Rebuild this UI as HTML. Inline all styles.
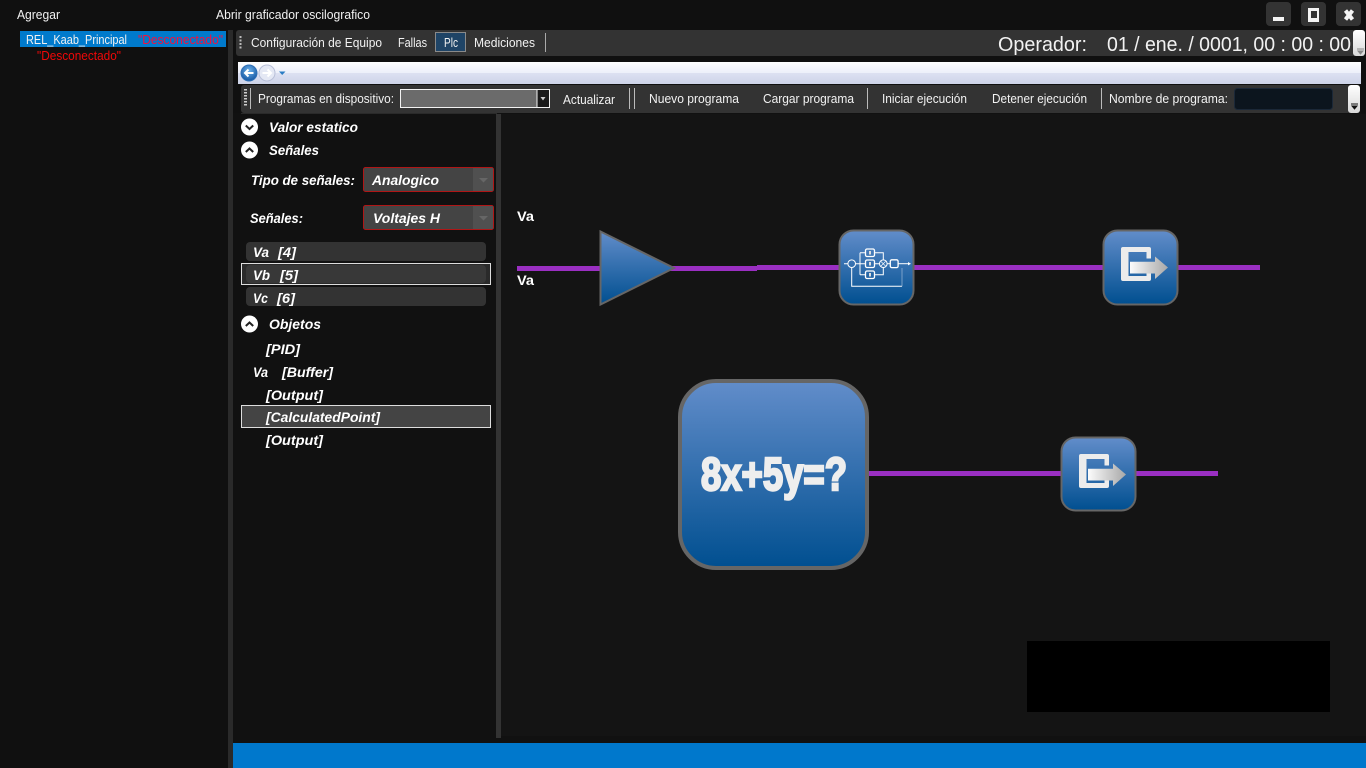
<!DOCTYPE html>
<html><head><meta charset="utf-8"><title>PLC</title>
<style>
html,body{margin:0;padding:0;width:1366px;height:768px;overflow:hidden;background:#101010}
svg{display:block;position:absolute;left:0;top:0}
text{font-family:"Liberation Sans",sans-serif;font-size:12.5px;fill:#f2f2f2;white-space:pre}
.b{font-weight:bold;font-style:italic;font-size:13.5px;fill:#fff}
.v{font-weight:bold;font-size:14px;fill:#fff}
.r{fill:#f00808}
</style></head><body>
<svg width="1366" height="768" viewBox="0 0 1366 768" xmlns="http://www.w3.org/2000/svg">
<defs>
<linearGradient id="bl" x1="0" y1="0" x2="0" y2="1"><stop offset="0" stop-color="#628dca"/><stop offset="1" stop-color="#004f90"/></linearGradient>
<linearGradient id="ar" x1="0" y1="0" x2="1" y2="0"><stop offset="0" stop-color="#fbfbfb"/><stop offset="1" stop-color="#a8a8a8"/></linearGradient>
<linearGradient id="band" x1="0" y1="0" x2="0" y2="1"><stop offset="0" stop-color="#fff"/><stop offset=".5" stop-color="#eceffa"/><stop offset=".5" stop-color="#dde1f2"/><stop offset="1" stop-color="#cdd3e8"/></linearGradient>
<linearGradient id="end" x1="0" y1="0" x2="0" y2="1"><stop offset="0" stop-color="#fff"/><stop offset="1" stop-color="#d8d8d8"/></linearGradient>
<radialGradient id="back" cx=".5" cy=".35" r=".7"><stop offset="0" stop-color="#6db1ea"/><stop offset="1" stop-color="#0d4f9c"/></radialGradient>
</defs>
<rect width="1366" height="768" fill="#101010"/>
<!-- left panel -->
<rect x="20" y="31" width="206" height="16" fill="#007acc"/>
<rect x="228" y="30" width="5" height="738" fill="#2a2a2a"/>
<!-- main -->
<rect x="233" y="113" width="1133" height="630" fill="#111"/>
<rect x="501" y="114" width="865" height="622" fill="#141414"/>
<rect x="241" y="113" width="256" height="1" fill="#2a2a2a"/>
<rect x="496" y="114" width="5" height="624" fill="#333"/>
<rect x="233" y="743" width="1133" height="25" fill="#0078cc"/>
<rect x="1027" y="641" width="303" height="71" fill="#000"/>
<!-- window buttons -->
<rect x="1266" y="2" width="25" height="24" rx="4" fill="#333"/>
<rect x="1301" y="2" width="25" height="24" rx="4" fill="#333"/>
<rect x="1336" y="2" width="25" height="24" rx="4" fill="#333"/>
<rect x="1273" y="17" width="11" height="4" fill="#f4f4f4"/>
<path d="M1308 8H1319V22H1308ZM1311 11V18H1317V11Z" fill="#f4f4f4" fill-rule="evenodd"/>
<path d="M1345.500 10.500L1352.500 19.500M1352.500 10.500L1345.500 19.500" stroke="#f4f4f4" stroke-width="4" fill="none"/>
<!-- toolbar 1 -->
<rect x="236" y="30" width="1120" height="26" rx="3" fill="#333"/>
<rect x="1353" y="30" width="12" height="26" rx="3" fill="url(#end)"/>
<path d="M1357 49H1364M1358 51H1363L1360.500 54Z" stroke="#888" stroke-width="1" fill="#888"/>
<g fill="#bbb"><rect x="239.500" y="36" width="2" height="2"/><rect x="239.500" y="39.500" width="2" height="2"/><rect x="239.500" y="43" width="2" height="2"/><rect x="239.500" y="46.500" width="2" height="2"/></g>
<rect x="435.500" y="32.500" width="30" height="19" fill="#1f4466" stroke="#8a8a8a"/>
<rect x="545" y="33" width="1" height="19" fill="#aaa"/>
<!-- band -->
<rect x="238" y="62" width="1123" height="22" fill="url(#band)"/>
<circle cx="249" cy="73" r="8" fill="url(#back)" stroke="#2f6fb5"/>
<path d="M253.500 73H245.500M248.500 69.500L245 73L248.500 76.500" stroke="#fff" stroke-width="2" fill="none"/>
<circle cx="267" cy="73" r="8" fill="#e4e8f4" stroke="#b8bfd8"/>
<path d="M262.500 73H270.500M267.500 69.500L271 73L267.500 76.500" stroke="#fff" stroke-width="2" fill="none"/>
<path d="M279 71.500H285.500L282.200 75Z" fill="#2a7cc4"/>
<!-- toolbar 2 -->
<rect x="241" y="85" width="1110" height="28" rx="3" fill="#333"/>
<rect x="1348" y="85" width="12" height="28" rx="3" fill="url(#end)"/>
<path d="M1351 104H1358M1352 106H1357L1354.500 109Z" stroke="#111" stroke-width="1" fill="#111"/>
<g fill="#ccc"><rect x="244" y="89" width="3" height="1.500"/><rect x="244" y="92" width="3" height="1.500"/><rect x="244" y="95" width="3" height="1.500"/><rect x="244" y="98" width="3" height="1.500"/><rect x="244" y="101" width="3" height="1.500"/><rect x="244" y="104" width="3" height="1.500"/></g>
<g fill="#bbb"><rect x="250" y="88" width="1" height="21"/><rect x="629" y="88" width="1" height="21"/><rect x="634" y="88" width="1" height="21"/><rect x="867" y="88" width="1" height="21"/><rect x="1101" y="88" width="1" height="21"/></g>
<rect x="400.500" y="89.500" width="149" height="18" fill="#6b6b6b" stroke="#f2f2f2"/>
<rect x="537" y="90" width="12" height="17" fill="#1a1a1a"/>
<rect x="536.500" y="90" width="1" height="17" fill="#f2f2f2"/>
<path d="M540.500 97H545.500L543 100.500Z" fill="#ccc"/>
<rect x="1234.500" y="88.500" width="98" height="21" rx="3" fill="#0c151e" stroke="#1b2838"/>
<!-- top texts -->
<text x="17" y="19" textLength="43" lengthAdjust="spacingAndGlyphs">Agregar</text>
<text x="216" y="19" textLength="154" lengthAdjust="spacingAndGlyphs">Abrir graficador oscilografico</text>
<text x="26" y="44" textLength="101" lengthAdjust="spacingAndGlyphs">REL_Kaab_Principal</text>
<text x="138" y="44" textLength="85" lengthAdjust="spacingAndGlyphs" style="fill:#f5103c">"Desconectado"</text>
<text x="37" y="60" textLength="84" lengthAdjust="spacingAndGlyphs" class="r">"Desconectado"</text>
<text x="251" y="47" textLength="131" lengthAdjust="spacingAndGlyphs">Configuración de Equipo</text>
<text x="398" y="47" textLength="29" lengthAdjust="spacingAndGlyphs">Fallas</text>
<text x="444" y="47" textLength="14" lengthAdjust="spacingAndGlyphs">Plc</text>
<text x="474" y="47" textLength="61" lengthAdjust="spacingAndGlyphs">Mediciones</text>
<text x="998" y="51" textLength="89" lengthAdjust="spacingAndGlyphs" style="font-size:20px">Operador:</text>
<text x="1107" y="51" textLength="244" lengthAdjust="spacingAndGlyphs" style="font-size:20px">01 / ene. / 0001, 00 : 00 : 00</text>
<text x="258" y="103" textLength="136" lengthAdjust="spacingAndGlyphs">Programas en dispositivo:</text>
<text x="563" y="104" textLength="52" lengthAdjust="spacingAndGlyphs">Actualizar</text>
<text x="649" y="103" textLength="90" lengthAdjust="spacingAndGlyphs">Nuevo programa</text>
<text x="763" y="103" textLength="91" lengthAdjust="spacingAndGlyphs">Cargar programa</text>
<text x="882" y="103" textLength="85" lengthAdjust="spacingAndGlyphs">Iniciar ejecución</text>
<text x="992" y="103" textLength="95" lengthAdjust="spacingAndGlyphs">Detener ejecución</text>
<text x="1109" y="103" textLength="119" lengthAdjust="spacingAndGlyphs">Nombre de programa:</text>
<!-- side list -->
<circle cx="249.500" cy="127" r="8.500" fill="#fff"/>
<path d="M245.800 125.500L249.500 129L253.200 125.500" stroke="#222" stroke-width="2" fill="none"/>
<circle cx="249.500" cy="150" r="8.500" fill="#fff"/>
<path d="M245.800 152L249.500 148.500L253.200 152" stroke="#222" stroke-width="2" fill="none"/>
<circle cx="249.500" cy="324" r="8.500" fill="#fff"/>
<path d="M245.800 326L249.500 322.500L253.200 326" stroke="#222" stroke-width="2" fill="none"/>
<text class="b" x="269" y="132" textLength="89" lengthAdjust="spacingAndGlyphs">Valor estatico</text>
<text class="b" x="269" y="155" textLength="50" lengthAdjust="spacingAndGlyphs">Señales</text>
<text class="b" x="251" y="185" textLength="104" lengthAdjust="spacingAndGlyphs">Tipo de señales:</text>
<text class="b" x="250" y="223" textLength="53" lengthAdjust="spacingAndGlyphs">Señales:</text>
<rect x="363.500" y="167.500" width="130" height="24" rx="2" fill="#444" stroke="#b01616"/>
<rect x="473" y="168" width="20" height="23" fill="#505050"/>
<path d="M479 178H488L483.500 182.500Z" fill="#666"/>
<rect x="363.500" y="205.500" width="130" height="24" rx="2" fill="#444" stroke="#b01616"/>
<rect x="473" y="206" width="20" height="23" fill="#505050"/>
<path d="M479 216H488L483.500 220.500Z" fill="#666"/>
<text class="b" x="372" y="185" textLength="67" lengthAdjust="spacingAndGlyphs">Analogico</text>
<text class="b" x="373" y="223" textLength="67" lengthAdjust="spacingAndGlyphs">Voltajes H</text>
<rect x="246" y="242" width="240" height="19" rx="4" fill="#333"/>
<rect x="241.500" y="263.500" width="249" height="21" fill="#2a2a2a" stroke="#ddd"/>
<rect x="246" y="265" width="240" height="18" rx="4" fill="#383838"/>
<rect x="246" y="287" width="240" height="19" rx="4" fill="#333"/>
<text class="b" x="253" y="257" textLength="16" lengthAdjust="spacingAndGlyphs">Va</text>
<text class="b" x="278" y="257" textLength="18" lengthAdjust="spacingAndGlyphs">[4]</text>
<text class="b" x="253" y="280" textLength="17" lengthAdjust="spacingAndGlyphs">Vb</text>
<text class="b" x="280" y="280" textLength="18" lengthAdjust="spacingAndGlyphs">[5]</text>
<text class="b" x="253" y="303" textLength="15" lengthAdjust="spacingAndGlyphs">Vc</text>
<text class="b" x="277" y="303" textLength="18" lengthAdjust="spacingAndGlyphs">[6]</text>
<text class="b" x="269" y="329" textLength="52" lengthAdjust="spacingAndGlyphs">Objetos</text>
<text class="b" x="266" y="354" textLength="34" lengthAdjust="spacingAndGlyphs">[PID]</text>
<text class="b" x="253" y="377" textLength="15" lengthAdjust="spacingAndGlyphs">Va</text>
<text class="b" x="282" y="377" textLength="51" lengthAdjust="spacingAndGlyphs">[Buffer]</text>
<text class="b" x="266" y="400" textLength="57" lengthAdjust="spacingAndGlyphs">[Output]</text>
<rect x="241.500" y="405.500" width="249" height="22" fill="#444" stroke="#ddd"/>
<text class="b" x="266" y="422" textLength="114" lengthAdjust="spacingAndGlyphs">[CalculatedPoint]</text>
<text class="b" x="266" y="445" textLength="57" lengthAdjust="spacingAndGlyphs">[Output]</text>
<!-- canvas -->
<text class="v" x="517" y="221" textLength="17" lengthAdjust="spacingAndGlyphs">Va</text>
<text class="v" x="517" y="285" textLength="17" lengthAdjust="spacingAndGlyphs">Va</text>
<rect x="517" y="266" width="240" height="5" fill="#9a2fc2"/>
<rect x="757" y="265" width="503" height="5" fill="#9a2fc2"/>
<rect x="868" y="471" width="350" height="5" fill="#9a2fc2"/>
<path d="M600.500 231.500L674 268L600.500 304.500Z" fill="url(#bl)" stroke="#666" stroke-width="2"/>
<!-- PID block -->
<rect x="839.500" y="230.500" width="74" height="74" rx="14" fill="url(#bl)" stroke="#666" stroke-width="2"/>
<g stroke="#fff" stroke-width="1" fill="none">
<circle cx="851.700" cy="263.700" r="3.800"/>
<path d="M844 263.700H848M855.500 263.700H865.300M860 252.700V274.700M860 252.700H865.300M860 274.700H865.300"/>
<rect x="865.500" y="249" width="9" height="7.500" rx="1.500" stroke-width="1.300"/>
<rect x="865.500" y="260" width="9" height="7.500" rx="1.500" stroke-width="1.300"/>
<rect x="865.500" y="271" width="9" height="7.500" rx="1.500" stroke-width="1.300"/>
<path d="M874.700 252.700H883.300V260M874.700 274.700H883.300V267.500M874.700 263.700H879.500"/>
<circle cx="883.300" cy="263.700" r="3.800"/>
<path d="M881 261.500L885.500 266M885.500 261.500L881 266" stroke-width=".7"/>
<path d="M887 263.700H890"/>
<rect x="890.300" y="259.800" width="7.800" height="7.800" rx="1.500" stroke-width="1.300"/>
<path d="M898 263.700H909"/>
<path d="M851.700 267.500V286.300H902"/>
<path d="M902 286.300V268" stroke="#9db8d8" stroke-width=".7"/>
</g>
<path d="M908 262L911 263.700L908 265.400Z" fill="#fff"/>
<g fill="#ddd"><rect x="869" y="251" width="2" height="3.500"/><rect x="869" y="262" width="2" height="3.500"/><rect x="869" y="273" width="2" height="3.500"/></g>
<!-- Output block 1 -->
<rect x="1103.500" y="230.500" width="74" height="74" rx="14" fill="url(#bl)" stroke="#666" stroke-width="2"/>
<path d="M1123 247H1149Q1151 247 1151 249V258.500H1146.500V252H1128.500V276H1146.500V270H1151V279Q1151 281 1149 281H1123Q1121 281 1121 279V249Q1121 247 1123 247Z" fill="#ececec"/>
<path d="M1130 261.700H1155V256.500L1168 267.500L1155 279V273.500H1130Z" fill="url(#ar)"/>
<!-- Output block 2 -->
<rect x="1061.500" y="437.500" width="74" height="73" rx="14" fill="url(#bl)" stroke="#666" stroke-width="2"/>
<g transform="translate(-42 207)">
<path d="M1123 247H1149Q1151 247 1151 249V258.500H1146.500V252H1128.500V276H1146.500V270H1151V279Q1151 281 1149 281H1123Q1121 281 1121 279V249Q1121 247 1123 247Z" fill="#ececec"/>
<path d="M1130 261.700H1155V256.500L1168 267.500L1155 279V273.500H1130Z" fill="url(#ar)"/>
</g>
<!-- Big block -->
<rect x="680" y="381" width="187" height="187" rx="36" fill="url(#bl)" stroke="#666" stroke-width="4"/>
<text x="701" y="490" textLength="146" lengthAdjust="spacingAndGlyphs" style="font-size:46px;font-weight:bold;fill:#eee;stroke:#eee;stroke-width:2.400">8x+5y=?</text>
</svg>
</body></html>
